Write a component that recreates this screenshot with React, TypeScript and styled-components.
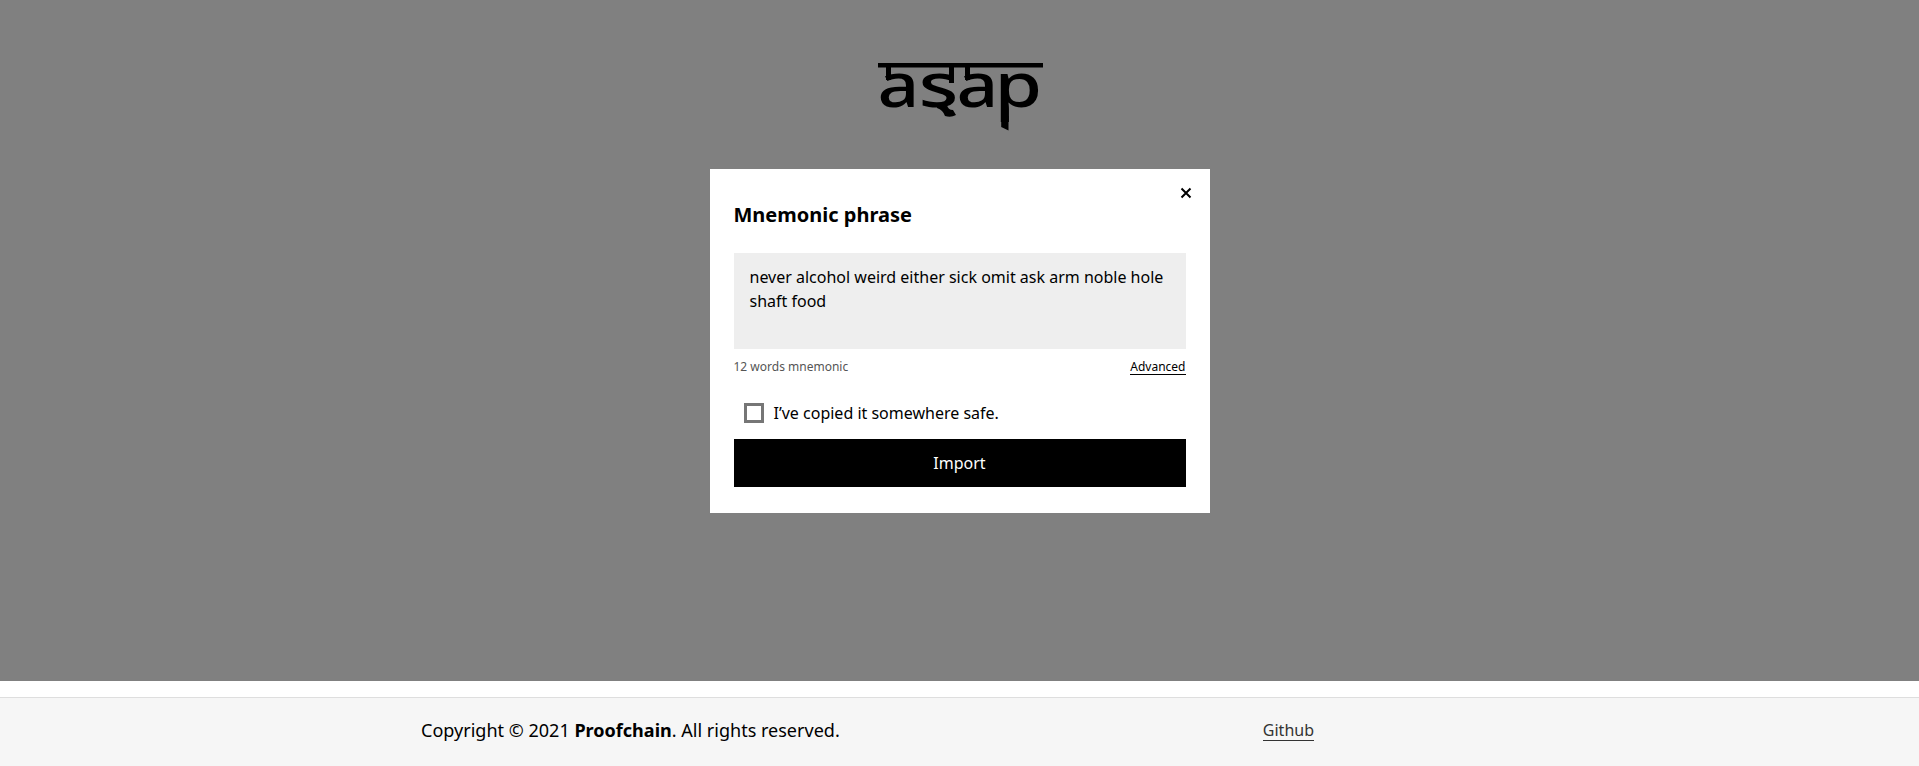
import React, { useState } from "react";
import styled, { createGlobalStyle } from "styled-components";

const GlobalStyle = createGlobalStyle`
  *, *::before, *::after { box-sizing: border-box; }
  body {
    margin: 0;
    background: #fff;
    color: #000;
    font-family: "Noto Sans", sans-serif;
    font-size: 16px;
    line-height: 24px;
    overflow: hidden;
  }
`;

const Page = styled.div`
  display: flex;
  flex-direction: column;
  height: 100vh;
`;

const Backdrop = styled.main`
  display: flex;
  flex-direction: column;
  align-items: center;
  height: 681px;
  padding-top: 40px;
  background: #808080;
`;

const Logo = styled.svg`
  display: block;
  width: 175px;
  height: 110px;
  flex: none;
  margin-bottom: 19px;
  overflow: visible;
`;

const Dialog = styled.section`
  position: relative;
  display: flex;
  flex-direction: column;
  width: 500px;
  height: 344px;
  padding: 31px 24px 26px;
  background: #fff;
`;

const CloseButton = styled.button`
  position: absolute;
  top: 12px;
  right: 12px;
  display: flex;
  align-items: center;
  justify-content: center;
  width: 24px;
  height: 24px;
  padding: 0;
  border: 0;
  background: none;
`;

const Title = styled.h2`
  margin: 0 0 23px;
  font-size: 20px;
  line-height: 30px;
  font-weight: 700;
`;

const Phrase = styled.textarea`
  display: block;
  width: 100%;
  height: 96px;
  padding: 12px 16px;
  border: 0;
  border-radius: 0;
  outline: 0;
  resize: none;
  background: #eee;
  color: #000;
  font: inherit;
`;

const MetaRow = styled.div`
  display: flex;
  justify-content: space-between;
  align-items: flex-start;
  height: 18px;
  margin-top: 8px;
  padding-top: 1px;
  font-size: 12px;
  line-height: 18px;
`;

const WordCount = styled.span`
  color: #555;
`;

const TextLink = styled.a<{ $tone: string; $line: number }>`
  display: block;
  height: ${(p) => p.$line}px;
  color: ${(p) => p.$tone};
  border-bottom: 1px solid ${(p) => p.$tone};
  text-decoration: none;
`;

const Confirm = styled.label`
  display: flex;
  align-items: center;
  gap: 10px;
  height: 24px;
  margin: 26px 0 14px;
  padding-left: 10px;
`;

const Checkbox = styled.input`
  appearance: none;
  width: 20px;
  height: 20px;
  margin: 0;
  border: 3px solid #767676;
  background: #fff;
  &:checked { background: #000; }
`;

const ImportButton = styled.button`
  height: 48px;
  border: 0;
  background: #000;
  color: #fff;
  font: inherit;
`;

const Footer = styled.footer`
  flex: 1;
  margin-top: 16px;
  border-top: 1px solid #dedede;
  background: #f6f6f6;
`;

const FooterInner = styled.div`
  display: flex;
  justify-content: space-between;
  width: 893px;
  margin: 0 0 0 421px;
  padding-top: 19px;
`;

const Copyright = styled.p`
  margin: 0;
  font-size: 18.04px;
  line-height: 27px;
`;

const FooterNav = styled.nav`
  padding-top: 1px;
`;

function AsapLogo() {
  return (
    <Logo viewBox="0 -16 175 110" role="img" aria-label="asap">
      <rect x="6" y="7" width="165" height="4.5" />
      <rect x="14" y="11" width="5" height="13" />
      <rect x="77" y="11" width="5" height="16" />
      <rect x="93" y="11" width="5" height="13" />
      <g fontFamily="Noto Sans, sans-serif" fontWeight="500" fontSize="62">
        <text transform="translate(5.5 50.5) scale(1.18 1)">a</text>
        <text transform="translate(46.5 50.5) scale(1.33 1)">s</text>
        <text transform="translate(84.5 50.5) scale(1.18 1)">a</text>
        <text transform="translate(122.5 50.5) scale(1.24 1)">p</text>
      </g>
      <path d="M65 49 L75 49 Q76 54 81 54 L84 59 Q79 62 73 60 Q71 54 65 52Z" />
      <path d="M129.2 60 H136.5 V74.5 L129.2 71Z" />
    </Logo>
  );
}

export default function App() {
  const [phrase, setPhrase] = useState(
    "never alcohol weird either sick omit ask arm noble hole shaft food"
  );
  return (
    <Page>
      <GlobalStyle />
      <Backdrop>
        <AsapLogo />
        <Dialog role="dialog" aria-labelledby="dialog-title">
          <CloseButton aria-label="Close">
            <svg width="12" height="12" viewBox="0 0 12 12" fill="none" stroke="#000" strokeWidth="2">
              <path d="M1.5 1.5l9 9M10.5 1.5l-9 9" />
            </svg>
          </CloseButton>
          <Title id="dialog-title">Mnemonic phrase</Title>
          <Phrase
            value={phrase}
            spellCheck={false}
            onChange={(e) => setPhrase(e.target.value)}
          />
          <MetaRow>
            <WordCount>{phrase.trim().split(/\s+/).length} words mnemonic</WordCount>
            <TextLink $tone="#000" $line={17} href="#advanced">Advanced</TextLink>
          </MetaRow>
          <Confirm>
            <Checkbox type="checkbox" />
            I’ve copied it somewhere safe.
          </Confirm>
          <ImportButton>Import</ImportButton>
        </Dialog>
      </Backdrop>
      <Footer>
        <FooterInner>
          <Copyright>
            Copyright © 2021 <strong>Proofchain</strong>. All rights reserved.
          </Copyright>
          <FooterNav>
            <TextLink $tone="#333" $line={23} href="#github">Github</TextLink>
          </FooterNav>
        </FooterInner>
      </Footer>
    </Page>
  );
}
